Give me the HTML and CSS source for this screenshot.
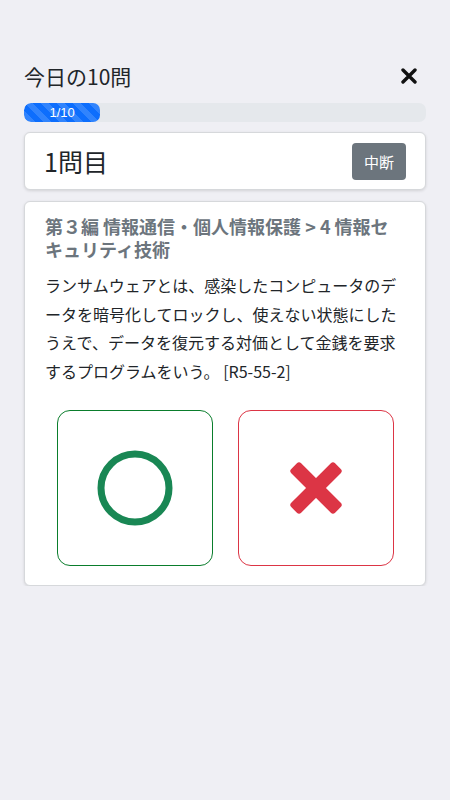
FILE: index.html
```html
<!DOCTYPE html>
<html lang="ja">
<head>
    <meta charset="UTF-8">
    <meta name="viewport" content="width=device-width, initial-scale=1.0">
    <title>今日の10問</title>
    <link rel="stylesheet" href="styles.css">
</head>
<body>
    <div class="container">

        <!-- ヘッダー -->
        <div class="title-row">
            <h5 class="title">今日の10問</h5>
            <button class="close-btn" aria-label="閉じる">
                <svg width="16" height="16" viewBox="0 0 16 16">
                    <path d="M2 2 L14 14 M14 2 L2 14" stroke="#111" stroke-width="3.4" stroke-linecap="round"/>
                </svg>
            </button>
        </div>

        <!-- 進捗 -->
        <div class="progress">
            <div class="progress-bar" style="width: 19%;">1/10</div>
        </div>

        <!-- 問題番号 -->
        <div class="card number-card">
            <h3 class="number">1問目</h3>
            <button class="btn-stop">中断</button>
        </div>

        <!-- 問題 -->
        <div class="card question-card">
            <h6 class="category">第３編 情報通信・個人情報保護 &gt; 4 情報セキュリティ技術</h6>
            <p class="question">ランサムウェアとは、感染したコンピュータのデータを暗号化してロックし、使えない状態にしたうえで、データを復元する対価として金銭を要求するプログラムをいう。 [R5-55-2]</p>

            <div class="answers">
                <button class="answer answer-ok" aria-label="正しい">
                    <svg width="80" height="80" viewBox="0 0 80 80">
                        <circle cx="40" cy="40" r="34" fill="none" stroke="#198754" stroke-width="7"/>
                    </svg>
                </button>
                <button class="answer answer-ng" aria-label="誤り">
                    <svg width="60" height="60" viewBox="0 0 60 60">
                        <g fill="#dc3545" transform="rotate(45 30 30)">
                            <rect x="-1" y="23" width="62" height="14" rx="3"/>
                            <rect x="23" y="-1" width="14" height="62" rx="3"/>
                        </g>
                    </svg>
                </button>
            </div>
        </div>

    </div>
</body>
</html>
```

FILE: styles.css
```css
* {
    box-sizing: border-box;
}

body {
    margin: 0;
    background: #efeff4;
    font-family: "Noto Sans CJK JP", "Liberation Sans", sans-serif;
    color: #212529;
}

.container {
    width: 402px;
    margin: 0 auto;
    padding-top: 62px;
}

.title-row {
    display: flex;
    justify-content: space-between;
    align-items: center;
    margin-bottom: 13px;
}

.title {
    margin: 0;
    font-size: 21px;
    font-weight: 400;
    line-height: 28px;
}

.close-btn {
    border: none;
    background: none;
    padding: 0;
    margin-right: 9px;
    display: flex;
    cursor: pointer;
}

.progress {
    height: 19px;
    background: #e5e8ec;
    border-radius: 7px;
    overflow: hidden;
    margin-bottom: 10px;
}

.progress-bar {
    height: 100%;
    display: flex;
    align-items: center;
    justify-content: center;
    color: white;
    font-size: 13px;
    font-family: "Liberation Sans", sans-serif;
    background-color: #0d6efd;
    background-image: linear-gradient(45deg, rgba(255, 255, 255, .15) 25%, transparent 25%, transparent 50%, rgba(255, 255, 255, .15) 50%, rgba(255, 255, 255, .15) 75%, transparent 75%, transparent);
    background-size: 16px 16px;
    border-radius: 7px;
}

.card {
    background: white;
    border: 1px solid #d6d8db;
    border-radius: 6px;
    box-shadow: 0 1px 3px rgba(0, 0, 0, 0.12);
}

.number-card {
    display: flex;
    justify-content: space-between;
    align-items: center;
    height: 58px;
    padding: 0 19px 0 19px;
    margin-bottom: 11px;
}

.number {
    margin: 0;
    font-size: 25px;
    font-weight: 400;
}

.btn-stop {
    width: 54px;
    height: 37px;
    border: none;
    border-radius: 4px;
    background: #6c757d;
    color: white;
    font-family: inherit;
    font-size: 15px;
    padding: 0;
}

.question-card {
    padding: 13px 20px 19px 20px;
}

.category {
    margin: 0 0 10px 0;
    font-size: 18px;
    font-weight: 700;
    line-height: 23px;
    color: #6c757d;
}

.question {
    margin: 0 0 24px 0;
    font-size: 16px;
    line-height: 28.7px;
}

.answers {
    display: flex;
    justify-content: center;
    gap: 25px;
}

.answer {
    width: 156px;
    height: 156px;
    background: white;
    border-radius: 13px;
    display: flex;
    align-items: center;
    justify-content: center;
    padding: 0;
    cursor: pointer;
}

.answer-ok {
    border: 1px solid #0a7d2c;
}

.answer-ng {
    border: 1px solid #dc3545;
}
```
